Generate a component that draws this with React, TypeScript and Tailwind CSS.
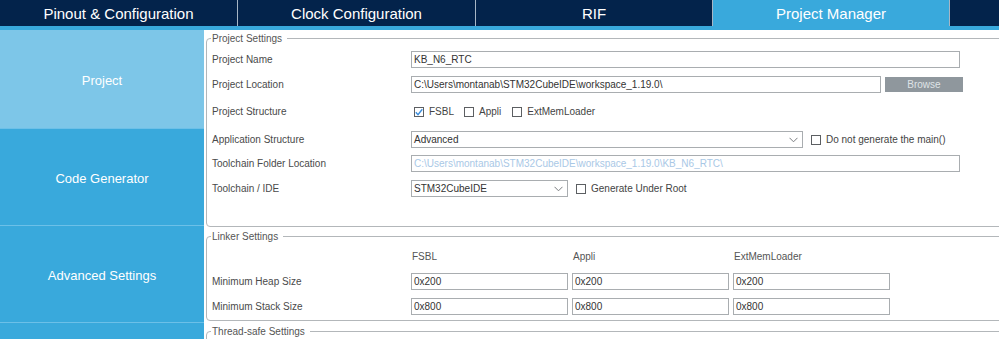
import React from 'react';

const font = "font-['Liberation_Sans',Arial,sans-serif]";

function Box({ checked }: { checked?: boolean }) {
  return (
    <span className="w-[10px] h-[10px] border border-[#5c5f62] bg-white flex items-center justify-center shrink-0">
      {checked && (
        <svg width="8" height="8" viewBox="0 0 8 8">
          <polyline points="0.8,4.2 3,6.6 7.3,1.2" fill="none" stroke="#3b8ede" strokeWidth="1.4" />
        </svg>
      )}
    </span>
  );
}

function Check({ label, checked, className = '' }: { label: string; checked?: boolean; className?: string }) {
  return (
    <div className={`flex items-center gap-[5px] ${className}`}>
      <Box checked={checked} />
      <span className="text-[#444]">{label}</span>
    </div>
  );
}

function Input({ value, w, muted }: { value: string; w: string; muted?: boolean }) {
  return (
    <div
      className={`h-[17px] border border-[#a9adb0] bg-white flex items-center px-[2px] shrink-0 ${w} ${
        muted ? 'text-[#a9c8e6]' : 'text-[#333]'
      }`}
    >
      {value}
    </div>
  );
}

function Select({ value, w }: { value: string; w: string }) {
  return (
    <div className={`h-[17px] border border-[#a9adb0] bg-white flex items-center justify-between pl-[2px] pr-[4px] shrink-0 text-[#333] ${w}`}>
      <span>{value}</span>
      <svg width="9" height="6" viewBox="0 0 9 6">
        <polyline points="0.5,0.8 4.5,4.8 8.5,0.8" fill="none" stroke="#7a7d80" strokeWidth="1" />
      </svg>
    </div>
  );
}

function Row({ label, children, className = '' }: { label: string; children?: React.ReactNode; className?: string }) {
  return (
    <div className={`h-[25px] flex items-center ${className}`}>
      <div className="w-[200px] shrink-0 pl-[1px] text-[#4a4a4a]">{label}</div>
      {children}
    </div>
  );
}

function Group({ title, children, className = '' }: { title: string; children?: React.ReactNode; className?: string }) {
  return (
    <fieldset className={`border border-[#b3b7ba] rounded-[4px] pl-[4px] w-[830px] ${className}`}>
      <legend className="pl-[1px] pr-[5px] leading-[13px] text-[#555]">{title}</legend>
      {children}
    </fieldset>
  );
}

export default function App() {
  const tabs = [
    { name: 'Pinout & Configuration', w: 'w-[238px]' },
    { name: 'Clock Configuration', w: 'w-[238px]' },
    { name: 'RIF', w: 'w-[237px]' },
    { name: 'Project Manager', w: 'w-[237px]', active: true },
  ];

  return (
    <div className={`w-[999px] h-[339px] overflow-hidden bg-white flex flex-col ${font}`}>
      {/* Top tabs */}
      <div className="h-[26px] flex bg-[#03234b] shrink-0">
        {tabs.map((t) => (
          <div
            key={t.name}
            className={`${t.w} h-full border-r border-[#a7b6c5] flex items-center justify-center pt-[3px] text-[15px] text-white ${
              t.active ? 'bg-[#39a9dc]' : ''
            }`}
          >
            {t.name}
          </div>
        ))}
        <div className="flex-1" />
      </div>
      <div className="h-[4px] bg-[#39a9dc] shrink-0" />

      <div className="flex flex-1 min-h-0">
        {/* Sidebar */}
        <div className="w-[204px] shrink-0 flex flex-col bg-[#39a9dc] text-white text-[13px]">
          <div className="h-[98px] bg-[#7dc6e8] flex items-center justify-center pt-[3px]">Project</div>
          <div className="h-[97px] border-t border-[#6cc0e8] flex items-center justify-center pt-[3px]">Code Generator</div>
          <div className="h-[97px] border-t border-[#6cc0e8] flex items-center justify-center pt-[3px]">Advanced Settings</div>
          <div className="flex-1 border-t border-[#6cc0e8]" />
        </div>

        {/* Content */}
        <div className="flex-1 overflow-hidden pl-[2px] text-[10px]">
          <Group title="Project Settings" className="mt-[2px] pb-[25px]">
            <Row label="Project Name" className="mt-[2px]">
              <Input value="KB_N6_RTC" w="w-[549px]" />
            </Row>
            <Row label="Project Location">
              <Input value="C:\Users\montanab\STM32CubeIDE\workspace_1.19.0\" w="w-[470px]" />
              <div className="ml-[4px] w-[78px] h-[15px] bg-[#8f979d] text-[#dfe3e6] flex items-center justify-center">Browse</div>
            </Row>
            <Row label="Project Structure" className="mt-[2px]">
              <div className="flex items-center ml-[3px]">
                <Check label="FSBL" checked />
                <Check label="Appli" className="ml-[10px]" />
                <Check label="ExtMemLoader" className="ml-[11px]" />
              </div>
            </Row>
            <Row label="Application Structure" className="mt-[3px]">
              <Select value="Advanced" w="w-[392px]" />
              <Check label="Do not generate the main()" className="ml-[8px]" />
            </Row>
            <Row label="Toolchain Folder Location" className="-mt-[1px]">
              <Input value="C:\Users\montanab\STM32CubeIDE\workspace_1.19.0\KB_N6_RTC\" w="w-[549px]" muted />
            </Row>
            <Row label="Toolchain / IDE">
              <Select value="STM32CubeIDE" w="w-[157px]" />
              <Check label="Generate Under Root" className="ml-[8px]" />
            </Row>
          </Group>

          <Group title="Linker Settings" className="mt-[3px] pb-[1px]">
            <Row label="" className="mt-[1px]">
              <div className="w-[161px] pl-[1px] text-[#555]">FSBL</div>
              <div className="w-[161px] pl-[1px] text-[#555]">Appli</div>
              <div className="w-[161px] pl-[1px] text-[#555]">ExtMemLoader</div>
            </Row>
            <Row label="Minimum Heap Size">
              <div className="flex gap-[4px]">
                <Input value="0x200" w="w-[157px]" />
                <Input value="0x200" w="w-[157px]" />
                <Input value="0x200" w="w-[157px]" />
              </div>
            </Row>
            <Row label="Minimum Stack Size">
              <div className="flex gap-[4px]">
                <Input value="0x800" w="w-[157px]" />
                <Input value="0x800" w="w-[157px]" />
                <Input value="0x800" w="w-[157px]" />
              </div>
            </Row>
          </Group>

          <Group title="Thread-safe Settings" className="mt-[4px] h-[40px]" />
        </div>
      </div>
    </div>
  );
}
